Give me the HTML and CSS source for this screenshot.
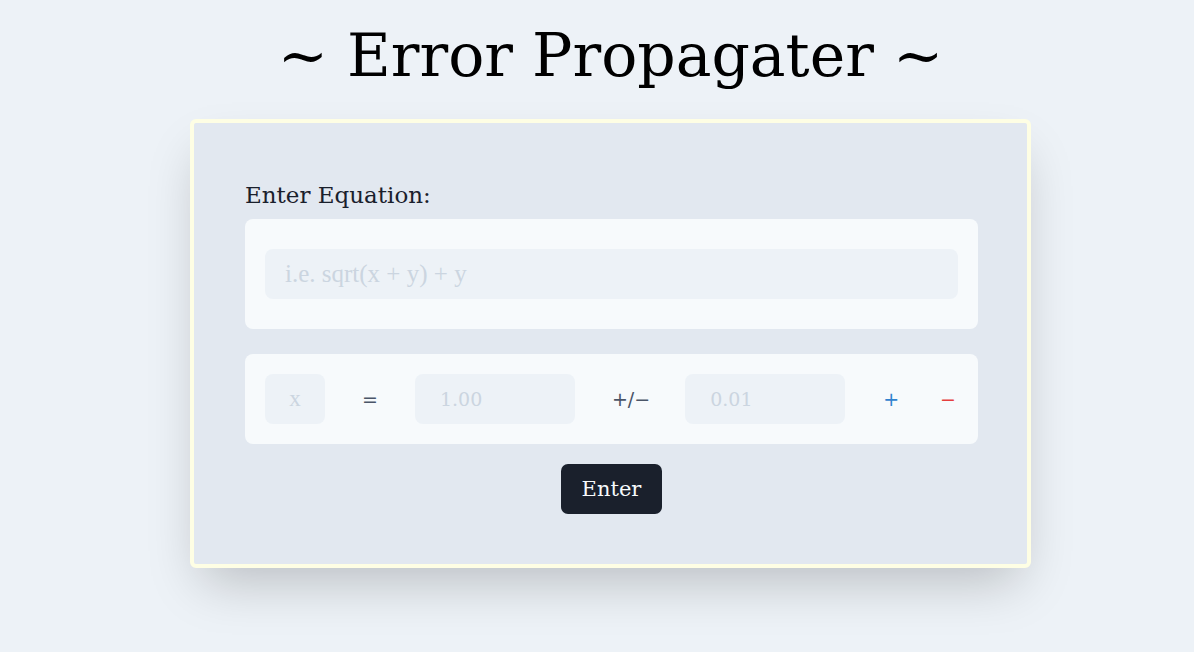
FILE: index.html
```html
<!DOCTYPE html>
<html>
<head>
<meta charset="utf-8">
<link rel="stylesheet" href="styles.css">
</head>
<body>
<div class="page">
  <h1 class="title">~ Error Propagater ~</h1>
  <div class="card">
    <label class="label">Enter Equation:</label>
    <div class="panel panel-eq">
      <input class="field field-eq" type="text" placeholder="i.e. sqrt(x + y) + y">
    </div>
    <div class="panel panel-var">
      <input class="field field-name" type="text" placeholder="x">
      <span class="op op-eq">=</span>
      <input class="field field-num" type="text" placeholder="1.00">
      <span class="op op-pm">+/−</span>
      <input class="field field-num" type="text" placeholder="0.01">
      <span class="op op-add">+</span>
      <span class="op op-sub">−</span>
    </div>
    <div class="actions">
      <button class="btn">Enter</button>
    </div>
  </div>
</div>
</body>
</html>
```

FILE: styles.css
```css
html, body {
  margin: 0;
  padding: 0;
  background: #edf2f7;
}
body {
  font-family: "DejaVu Serif", serif;
  color: #1a202c;
  min-height: 652px;
}
.page {
  display: flex;
  flex-direction: column;
  align-items: center;
  padding-left: 27px;
  padding-bottom: 80px;
}
.title {
  margin: 19px 0 0 0;
  font-size: 60px;
  font-weight: normal;
  line-height: 72px;
  color: #000;
}
.card {
  margin-top: 28px;
  width: 733px;
  padding: 57px 49px 50px 51px;
  background: #e2e8f0;
  border: 4px solid #fefee4;
  border-radius: 6px;
  box-shadow: 0 25px 50px -12px rgba(0, 0, 0, 0.22);
  display: flex;
  flex-direction: column;
}
.label {
  font-size: 23px;
  line-height: 30px;
  color: #1a202c;
  margin-bottom: 9px;
}
.panel {
  background: #f7fafc;
  border-radius: 8px;
}
.panel-eq {
  padding: 30px 20px;
}
.panel-var {
  margin-top: 25px;
  padding: 20px;
  display: flex;
  align-items: center;
  white-space: nowrap;
}
.field {
  box-sizing: border-box;
  flex-shrink: 0;
  height: 50px;
  border: none;
  outline: none;
  background: #edf2f7;
  border-radius: 8px;
  color: #4a5568;
}
.field::placeholder {
  color: #cbd5e0;
}
.field-eq {
  width: 100%;
  padding: 0 20px;
  font-family: "Liberation Serif", serif;
  font-size: 25px;
}
.field-name {
  width: 60px;
  padding: 0;
  text-align: center;
  font-family: "Liberation Serif", serif;
  font-size: 23px;
}
.field-num {
  width: 160px;
  padding: 0 25px;
  font-family: "DejaVu Serif", serif;
  font-size: 19px;
}
.op {
  flex-shrink: 0;
  font-family: "DejaVu Sans", sans-serif;
  font-size: 19px;
  color: #4a5568;
}
.op-eq {
  margin: 0 37px 0 37px;
}
.op-pm {
  margin: 0 35px 0 37px;
}
.op-add {
  margin-left: 38px;
  color: #3182ce;
}
.op-sub {
  margin-left: 41px;
  color: #e53e3e;
}
.actions {
  display: flex;
  justify-content: center;
  margin-top: 20px;
}
.btn {
  width: 101px;
  height: 50px;
  border: none;
  border-radius: 7px;
  background: #1a202c;
  color: #f7fafc;
  font-family: "DejaVu Serif", serif;
  font-size: 21px;
  cursor: pointer;
}
```
